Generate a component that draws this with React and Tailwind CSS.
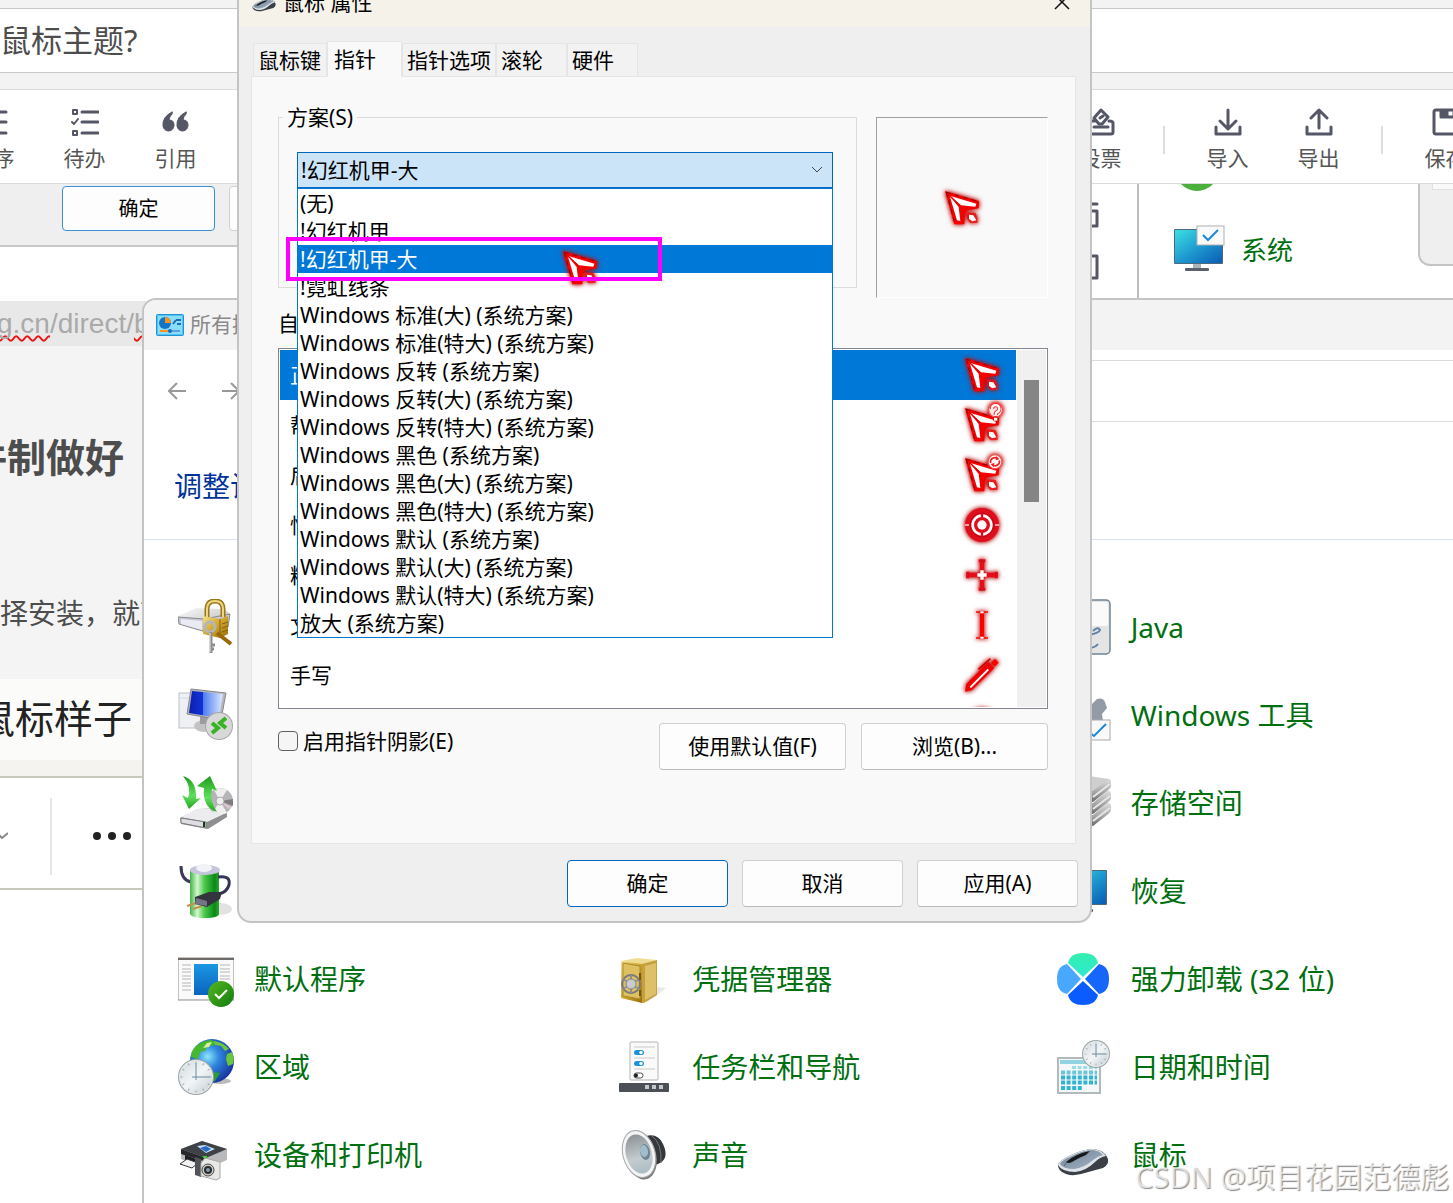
import React from "react";

const SCHEMES = [
  "(无)",
  "!幻红机甲",
  "!幻红机甲-大",
  "!霓虹线条",
  "Windows 标准(大) (系统方案)",
  "Windows 标准(特大) (系统方案)",
  "Windows 反转 (系统方案)",
  "Windows 反转(大) (系统方案)",
  "Windows 反转(特大) (系统方案)",
  "Windows 黑色 (系统方案)",
  "Windows 黑色(大) (系统方案)",
  "Windows 黑色(特大) (系统方案)",
  "Windows 默认 (系统方案)",
  "Windows 默认(大) (系统方案)",
  "Windows 默认(特大) (系统方案)",
  "放大 (系统方案)",
];
const CURRENT = "!幻红机甲-大";

/* ---------- pointer artwork ---------- */

function ArrowShape() {
  return (
    <>
      <path d="M0 0 102 30 101 52 66 58 60 68 58 100 28 100Z" fill="#f40000" />
      <path d="M4 4 98 31M4 4 30 98" stroke="#8a0000" strokeWidth="3" strokeDasharray="14 12" />
      <path d="M14 14 94 38 91 47 48 43Z" fill="#fff" />
      <path d="M14 14 41 48 46 90 36 88Z" fill="#fff" />
      <path d="M12 12 46 45" stroke="#e40000" strokeWidth="4" />
      <path d="M64 64 92 66Q100 82 98 96L76 96Q62 84 64 64Z" fill="#f01010" opacity="0.8" />
      <path d="M72 71 85 73 94 88 82 91 72 84Z" fill="#fff" />
    </>
  );
}

function Pointer({ kind = "arrow" }) {
  return (
    <svg
      viewBox="0 0 102 102"
      className="block size-[34px] shrink-0 overflow-visible [filter:drop-shadow(0_0_2px_#b00000)_drop-shadow(0_0_2px_#c8282880)]"
      fill="none"
      aria-hidden="true"
    >
      {(kind === "arrow" || kind === "help" || kind === "work") && <ArrowShape />}
      {kind === "help" && (
        <>
          <circle cx="92" cy="6" r="21" fill="#ffe4e4" stroke="#ff5050" strokeWidth="4" />
          <path d="M81 3A11 11 0 1 1 95 13Q92 15 92 21" stroke="#f03030" strokeWidth="13" />
          <path d="M81 3A11 11 0 1 1 95 13Q92 15 92 21" stroke="#fff" strokeWidth="7" />
          <circle cx="92" cy="33" r="8" fill="#e00000" />
          <rect x="87" y="29" width="10" height="9" fill="#fff" />
        </>
      )}
      {kind === "work" && (
        <>
          <circle cx="90" cy="11" r="21" fill="#fff" stroke="#ff5050" strokeWidth="4" />
          <path d="M77 15A13 13 0 0 1 98 2M103 7A13 13 0 0 1 82 20" stroke="#f02020" strokeWidth="5" />
          <path d="M94 -6 103 4 92 7ZM86 28 77 18 88 15Z" fill="#f02020" />
        </>
      )}
      {kind === "busy" && (
        <>
          <circle cx="51" cy="51" r="51" fill="#e00d1c" />
          <circle cx="51" cy="51" r="36" stroke="#b30a18" strokeWidth="3" />
          <circle cx="51" cy="51" r="28" stroke="#fff" strokeWidth="8" />
          <path d="M51 16V86" stroke="#e00d1c" strokeWidth="7" />
          <circle cx="51" cy="51" r="14" fill="#fff" />
          <path d="M0 51H12M90 51H102" stroke="#ffd0d0" strokeWidth="5" />
        </>
      )}
      {kind === "cross" && (
        <>
          <path d="M51 6V96M6 51H96" stroke="#e80c1a" strokeWidth="13" />
          <path d="M41 8H61M41 94H61M8 41V61M94 41V61" stroke="#d80c1a" strokeWidth="9" />
          <path d="M51 37V65M37 51H65" stroke="#fff" strokeWidth="10" />
        </>
      )}
      {kind === "text" && (
        <>
          <path d="M51 14V88" stroke="#f00" strokeWidth="12" />
          <path d="M33 12H47M55 12H69M33 90H47M55 90H69" stroke="#f00" strokeWidth="4" />
          <path d="M46 13H56M46 89H56" stroke="#fff" strokeWidth="5" />
        </>
      )}
      {kind === "pen" && (
        <>
          <path d="M0 101 4 78 70 12 88 30 20 97Z" fill="#f00000" />
          <path d="M40 34 76 2" stroke="#d00000" strokeWidth="5" />
          <path d="M16 88 70 34" stroke="#fff" strokeWidth="6" />
          <path d="M78 14 90 2 101 14 89 26Z" fill="#f00" />
        </>
      )}
      {kind === "deny" && <circle cx="51" cy="51" r="42" stroke="#e00d1c" strokeWidth="17" />}
    </svg>
  );
}

const ROLES = [
  ["正常选择", "arrow"],
  ["帮助选择", "help"],
  ["后台运行", "work"],
  ["忙", "busy"],
  ["精确选择", "cross"],
  ["文本选择", "text"],
  ["手写", "pen"],
  ["不可用", "deny"],
];

/* ---------- control panel artwork, each on a 56 unit grid ---------- */

function Defs() {
  return (
    <svg className="absolute size-0" aria-hidden="true">
      <defs>
        <linearGradient id="gold" x1="0" y1="0" x2="1" y2="1">
          <stop offset="0" stopColor="#f4e08e" />
          <stop offset="0.5" stopColor="#d0a52c" />
          <stop offset="1" stopColor="#96700c" />
        </linearGradient>
        <linearGradient id="steel" x1="0" y1="0" x2="1" y2="1">
          <stop offset="0" stopColor="#fdfdfd" />
          <stop offset="0.6" stopColor="#cfcfd2" />
          <stop offset="1" stopColor="#8b8b8f" />
        </linearGradient>
        <linearGradient id="slab" x1="0" y1="0" x2="0" y2="1">
          <stop offset="0" stopColor="#dedede" />
          <stop offset="0.6" stopColor="#a2a2a2" />
          <stop offset="1" stopColor="#6a6a6a" />
        </linearGradient>
        <linearGradient id="screen" x1="0" y1="0" x2="1" y2="1">
          <stop offset="0" stopColor="#3de0e2" />
          <stop offset="0.5" stopColor="#1f9bd0" />
          <stop offset="1" stopColor="#0a5cb4" />
        </linearGradient>
        <linearGradient id="blueScreen" x1="0" y1="0" x2="1" y2="0">
          <stop offset="0" stopColor="#0a1fb0" />
          <stop offset="0.4" stopColor="#1233d8" />
          <stop offset="0.42" stopColor="#4d7bf2" />
          <stop offset="1" stopColor="#dfeaff" />
        </linearGradient>
        <linearGradient id="leaf" x1="0" y1="0" x2="0" y2="1">
          <stop offset="0" stopColor="#1f9a1b" />
          <stop offset="0.6" stopColor="#5fe05a" />
          <stop offset="1" stopColor="#23a31e" />
        </linearGradient>
        <linearGradient id="cell" x1="0" y1="0" x2="1" y2="0">
          <stop offset="0" stopColor="#3fb544" />
          <stop offset="0.25" stopColor="#d4f7cf" />
          <stop offset="0.5" stopColor="#4cc84c" />
          <stop offset="0.85" stopColor="#088a14" />
          <stop offset="1" stopColor="#2fa637" />
        </linearGradient>
        <linearGradient id="appBlue" x1="0" y1="0" x2="0" y2="1">
          <stop offset="0" stopColor="#1c97e4" />
          <stop offset="1" stopColor="#0a63bd" />
        </linearGradient>
        <linearGradient id="okGreen" x1="0" y1="0" x2="1" y2="1">
          <stop offset="0" stopColor="#55b91c" />
          <stop offset="1" stopColor="#117a13" />
        </linearGradient>
        <radialGradient id="ocean" cx="0.4" cy="0.4" r="0.65">
          <stop offset="0" stopColor="#8ce6fa" />
          <stop offset="0.4" stopColor="#2f86dd" />
          <stop offset="1" stopColor="#182f9c" />
        </radialGradient>
        <linearGradient id="face" x1="0" y1="0" x2="1" y2="1">
          <stop offset="0" stopColor="#d3dade" />
          <stop offset="0.5" stopColor="#f2f5f6" />
          <stop offset="1" stopColor="#c4ced3" />
        </linearGradient>
        <linearGradient id="cone" x1="0" y1="0" x2="0" y2="1">
          <stop offset="0" stopColor="#8d9397" />
          <stop offset="0.6" stopColor="#c4ccd0" />
          <stop offset="1" stopColor="#a9bcc4" />
        </linearGradient>
        <linearGradient id="mouseTop" x1="0" y1="0" x2="1" y2="1">
          <stop offset="0" stopColor="#6f8195" />
          <stop offset="1" stopColor="#a5b5c7" />
        </linearGradient>
        <linearGradient id="petalTop" x1="0" y1="0" x2="0" y2="1">
          <stop offset="0" stopColor="#33efaf" />
          <stop offset="1" stopColor="#2ee9d0" />
        </linearGradient>
      </defs>
    </svg>
  );
}

function Clock({ cx, cy, r }) {
  return (
    <g>
      <circle cx={cx} cy={cy} r={r} fill="#9ba3a6" />
      <circle cx={cx} cy={cy} r={r - 1} fill="#e6eaeb" />
      <circle cx={cx} cy={cy} r={r - 2} fill="url(#face)" />
      <circle
        cx={cx}
        cy={cy}
        r={r - 3.5}
        fill="none"
        stroke="#7890a2"
        strokeWidth="2"
        pathLength="120"
        strokeDasharray="1 9"
        strokeDashoffset="0.5"
      />
      <path d={`M${cx} ${cy + 3}V${cy - r + 4}M${cx - 4} ${cy}H${cx + r - 4}`} stroke="#6b8aa0" strokeWidth="1" />
    </g>
  );
}

function MouseArt() {
  return (
    <>
      <path d="M3 38Q5 33 14 29 28 22 38 22 50 23 53 32 54 38 48 41L26 47Q14 50 7 45 3 42 3 38Z" fill="#3a4046" />
      <path d="M3 38Q5 33 14 29 28 22 38 22 47 23 51 29 45 30 40 35 31 44 20 45 7 45 3 38Z" fill="#dde3e8" />
      <path d="M5 37Q7 33 15 30 28 23 38 23 45 24 48 28 43 29 38 33 29 41 19 42 8 42 5 37Z" fill="url(#mouseTop)" />
      <path d="M11 35Q20 27 35 24L31 28Q23 31 17 35 13 37 11 35Z" fill="#16191c" />
      <path d="M12 35 9 39" stroke="#55616e" strokeWidth="1" />
    </>
  );
}

function MonitorArt() {
  return (
    <>
      <rect x="22" y="41" width="8" height="6" fill="#aab2ba" />
      <rect x="14" y="46" width="24" height="3" rx="1" fill="#59616a" />
      <rect x="3" y="7" width="49" height="35" rx="1" fill="#4c6a7c" />
      <rect x="4" y="8" width="47" height="33" fill="url(#screen)" />
    </>
  );
}

const ART = {
  lock: (
    <>
      <path d="M0 17 18 9 46 10 52 15 50 28 28 33 2 25Z" fill="url(#steel)" />
      <path d="M0 18 26 20 52 15 50 28 28 33 1 25Z" fill="#c9c9d3" stroke="#88888e" strokeWidth="1" />
      <path d="M3 20 24 22V31L3 25Z" fill="#ebebf6" />
      <path d="M29 18V10Q29 2 37 2T45 10V18" fill="none" stroke="#9a7818" strokeWidth="5" />
      <path d="M29 18V10Q29 2 37 2T45 10V18" fill="none" stroke="#f0d684" strokeWidth="2" />
      <path d="M25 17 42 20 50 17V35L42 39 25 35Z" fill="url(#gold)" />
      <path d="M42 20V39M44 25 50 23M44 29 50 27M44 33 50 31" stroke="#85600c" />
      <path d="M39 34 53 45" stroke="#9a6a08" strokeWidth="4" />
      <circle cx="32" cy="28" r="5" fill="none" stroke="#b5b5b5" strokeWidth="3" />
      <path d="M33 33V54M34 46H37M34 50H36" stroke="#8e8e8e" strokeWidth="3" />
      <path d="M32 34V53" stroke="#e8e8e8" strokeWidth="1" />
    </>
  ),
  remote: (
    <>
      <rect x="1" y="6" width="26" height="35" fill="#eef0f3" stroke="#bcc0c6" />
      <path d="M2 11H26" stroke="#d3d7dd" />
      <ellipse cx="26" cy="39" rx="10" ry="6" fill="#c3c3c6" />
      <path d="M22 30H32V37H22Z" fill="#9b9ba0" />
      <path d="M13 2 48 6 43 33 9 27Z" fill="#b7b7bb" stroke="#88888c" strokeWidth="1" />
      <path d="M14 4 45 7 41 31 11 26Z" fill="url(#blueScreen)" />
      <circle cx="41" cy="39" r="14" fill="#a6a6a6" />
      <circle cx="41" cy="39" r="13" fill="#d8d8d8" />
      <path d="M34 36 40 41 34 46M48 31 42 36 48 41" fill="none" stroke="#35b322" strokeWidth="4" />
    </>
  ),
  backup: (
    <>
      <path d="M2 43 20 34 44 33 49 38V42L30 54 3 49Z" fill="#8f8f92" />
      <path d="M2 42 20 34 44 33 48 38 29 47Z" fill="#ececee" />
      <path d="M3 43 28 47V53L3 48Z" fill="#dedee2" stroke="#7c7c80" />
      <rect x="25" y="47" width="2" height="5" fill="#103d12" />
      <circle cx="42" cy="26" r="13" fill="#b5b5b8" />
      <path d="M42 26 36 15Q42 11 49 15ZM42 26 49 38Q42 41 35 37Z" fill="#efeff0" />
      <path d="M42 26 55 24V31Z" fill="#7e7e82" />
      <path d="M42 26 53 32 51 34Z" fill="#e7c6cf" />
      <circle cx="42" cy="26" r="4" fill="#eee" stroke="#aaa" />
      <path d="M5 1Q19 5 18 24L23 23 11 34 4 20 10 23Q14 12 5 1Z" fill="url(#leaf)" />
      <path d="M32 1 39 16 34 14Q31 26 39 37 24 32 26 13L19 11Z" fill="url(#leaf)" />
    </>
  ),
  power: (
    <>
      <ellipse cx="42" cy="46" rx="12" ry="6" fill="#cfcfcf" opacity="0.6" />
      <path d="M3 3Q3 17 13 19" fill="none" stroke="#3a3a5c" strokeWidth="3" />
      <path d="M12 7V50Q12 55 27 55T41 50V7Z" fill="url(#cell)" />
      <ellipse cx="27" cy="7" rx="15" ry="5" fill="#c5c5dc" />
      <ellipse cx="26" cy="5" rx="8" ry="4" fill="#f2f2f8" />
      <path d="M40 14Q53 12 51 22 49 29 41 31" fill="none" stroke="#34345a" strokeWidth="3" />
      <path d="M18 40 9 43M24 43 15 46" stroke="#c58f52" strokeWidth="2" />
      <path d="M17 34 31 29 44 29 42 36 29 44 17 41Z" fill="#34343f" />
      <path d="M18 35 29 38V43L17 41Z" fill="#747485" />
    </>
  ),
  programs: (
    <>
      <rect x="0" y="7" width="56" height="42" fill="#fafafa" stroke="#8b8b8b" />
      <rect x="0" y="7" width="56" height="2" fill="#6d6a68" />
      <path
        d="M4 14H13M4 18H13M4 21H13M4 25H13M4 28H13M4 32H13M4 35H13M4 39H13M42 14H52M42 18H52M42 21H52M42 25H52M42 28H52"
        stroke="#b5b5b5"
      />
      <rect x="16" y="13" width="24" height="31" fill="url(#appBlue)" />
      <circle cx="43" cy="43" r="13" fill="url(#okGreen)" />
      <path d="M37 43 41 47 49 39" fill="none" stroke="#fff" strokeWidth="2" />
    </>
  ),
  region: (
    <>
      <ellipse cx="42" cy="42" rx="11" ry="3" fill="#bbb" />
      <circle cx="34" cy="22" r="22" fill="url(#ocean)" />
      <path d="M17 8Q25 1 33 1L38 3 35 7 30 6 27 12 22 13 20 20 13 18Q13 13 17 8Z" fill="#46b82e" />
      <path d="M36 2Q45 3 51 10L47 12 43 7 37 6ZM49 15 54 13Q57 20 55 25L50 27 48 20Z" fill="#69c63e" />
      <path d="M35 33 42 34 37 42 33 42Z" fill="#2f9b35" />
      <path d="M25 9 29 4 34 3 31 8Z" fill="#dcef9b" />
      <Clock cx={18} cy={38} r={18} />
    </>
  ),
  printer: (
    <>
      <path d="M3 22 24 14 49 22V33L28 42 3 32Z" fill="#b9b9bb" />
      <path d="M3 22 24 14 49 22 28 31Z" fill="#3e4247" />
      <path d="M3 22 28 31V35L3 27Z" fill="#26282c" />
      <path d="M19 19 27 18 37 22 28 26Z" fill="#bfe3fa" />
      <path d="M22 21 28 19 33 22 28 25Z" fill="#2c68c6" />
      <path d="M7 28 18 32V37L7 33Z" fill="#1c1d20" />
      <path d="M2 37 9 32 20 36 14 41Z" fill="#f2f2f2" stroke="#33363a" />
      <path d="M17 30 23 32V50L17 48Z" fill="#515357" />
      <path d="M23 36 27 31 42 35V51L38 53 23 49Z" fill="#e8e8e6" stroke="#a9a9a7" />
      <path d="M25 30H29" stroke="#39d02f" strokeWidth="2" />
      <circle cx="30" cy="43" r="6" fill="#c9c9c9" stroke="#4a4a4a" strokeWidth="1" />
      <circle cx="30" cy="43" r="4" fill="#2b2b2b" />
      <circle cx="30" cy="43" r="2" fill="#7f99aa" />
    </>
  ),
  safe: (
    <>
      <path d="M41 36 50 37 30 52Z" fill="#e8e8e8" />
      <path d="M5 10 21 7 41 9 26 14Z" fill="#efdc93" />
      <path d="M5 10 26 13V52L5 47Z" fill="url(#gold)" />
      <path d="M26 13 41 9V44L28 52 26 52Z" fill="#c5a03c" />
      <path d="M29 15 40 12V43L29 49Z" fill="#ddc067" />
      <path d="M7 12 24 15V48L7 45Z" fill="#dfc060" stroke="#a98726" strokeWidth="1" />
      <circle cx="15" cy="33" r="9" fill="none" stroke="#77797c" strokeWidth="2" />
      <path d="M15 24V42M7 28 23 38M7 38 23 28" stroke="#8d8f92" strokeWidth="2" />
      <circle cx="15" cy="33" r="5" fill="#c9cbcd" stroke="#85878a" />
      <path d="M24 22V29M24 39V45" stroke="#6f5a1a" strokeWidth="2" />
    </>
  ),
  taskbar: (
    <>
      <rect x="14" y="3" width="28" height="38" rx="1" fill="#fafafa" stroke="#b3b3b3" />
      <path d="M18 8H39M18 19H39M18 30H39" stroke="#c9c9c9" strokeWidth="1" />
      <rect x="18" y="11" width="10" height="5" rx="2.5" fill="#1b91dd" />
      <rect x="18" y="22" width="10" height="5" rx="2.5" fill="#1b91dd" />
      <circle cx="25" cy="13.5" r="1.7" fill="#fff" />
      <circle cx="25" cy="24.5" r="1.7" fill="#fff" />
      <rect x="18" y="34" width="9" height="5" rx="2.5" fill="#fff" stroke="#4a4a4a" />
      <circle cx="20" cy="36.5" r="2" fill="#222" />
      <rect x="3" y="44" width="50" height="9" rx="1" fill="#4b5056" />
      <path d="M29 46H33V50H29ZM36 46H40V50H36ZM43 46H47V50H43Z" fill="#c3c8cd" />
    </>
  ),
  sound: (
    <>
      <path d="M30 9Q42 6 47 17 54 32 42 37L34 40Z" fill="#35383b" />
      <path d="M36 9Q46 16 45 36" fill="none" stroke="#73777b" />
      <ellipse cx="24" cy="28" rx="16" ry="25" transform="rotate(-16 24 28)" fill="#77797b" />
      <ellipse cx="23" cy="27" rx="16" ry="24" transform="rotate(-16 23 27)" fill="#f4f4f4" stroke="#a5a7a9" />
      <ellipse cx="23" cy="27" rx="13" ry="20" transform="rotate(-16 23 27)" fill="url(#cone)" />
      <ellipse cx="29" cy="25" rx="5" ry="8" transform="rotate(-12 29 25)" fill="#6e8493" />
      <ellipse cx="28" cy="24" rx="4" ry="6" transform="rotate(-12 28 24)" fill="#a3bccb" />
    </>
  ),
  java: (
    <>
      <rect x="2" y="1" width="53" height="54" rx="4" fill="#e4e4e4" stroke="#6d8498" strokeWidth="1.5" />
      <rect x="4" y="3" width="49" height="24" rx="2" fill="#fafafa" />
      <path d="M34 36Q44 34 45 31 43 27 38 32M33 49Q40 49 43 45" fill="none" stroke="#5f84a6" strokeWidth="2" />
    </>
  ),
  tools: (
    <>
      <path d="M20 16Q24 10 30 14L36 18 42 12Q48 10 50 15L52 21 47 27 48 34H20Z" fill="#929ba6" />
      <rect x="26" y="33" width="29" height="20" fill="#f9f9f9" stroke="#a9a9a9" />
      <path d="M34 45 39 49 51 37" fill="none" stroke="#1c87dc" strokeWidth="2" />
    </>
  ),
  storage: (
    <>
      <path d="M6 38 38 40 52 28Q56 27 56 32V35Q56 37 52 40L38 51 6 46Z" fill="url(#slab)" />
      <path d="M6 26 38 28 52 16Q56 15 56 20V23Q56 25 52 28L38 39 6 34Z" fill="url(#slab)" />
      <path d="M6 10 38 15 52 4Q56 3 56 8V11Q56 13 52 16L38 27 6 22Z" fill="url(#slab)" />
      <path d="M6 8 34 1 54 4 38 16Z" fill="#cecece" />
      <path d="M38 22 55 9M38 34 55 21M38 46 55 33" stroke="#e6e6e6" strokeWidth="2" />
    </>
  ),
  recovery: <MonitorArt />,
  uninstall: (
    <>
      <path d="M28 26 13 12Q15 2 28 2T43 12Z" fill="url(#petalTop)" />
      <path d="M28 30 13 44Q15 54 28 54T43 44Z" fill="#0a5cff" />
      <path d="M26 28 12 13Q2 15 2 28T12 43Z" fill="#48a8ff" />
      <path d="M30 28 44 13Q54 15 54 28T44 43Z" fill="#1766fb" />
    </>
  ),
  calendar: (
    <>
      <rect x="3" y="19" width="42" height="35" fill="#f4f8f9" stroke="#b3babd" strokeWidth="2" />
      <rect x="5" y="21" width="38" height="4" fill="#92d3e2" />
      <path d="M17 28.5H42" stroke="#9fdbe8" strokeWidth="3" strokeDasharray="4 1.6" />
      <path d="M6 33.5H42" stroke="#6cc6dc" strokeWidth="4" strokeDasharray="4 1.6" />
      <path d="M6 38.5H42M6 43.5H42M6 49H27" stroke="#32b3d2" strokeWidth="4" strokeDasharray="4 1.6" />
      <Clock cx={41} cy={15} r={14} />
    </>
  ),
  mouse: <MouseArt />,
};

function Art({ name, className = "size-14" }) {
  return (
    <svg viewBox="0 0 56 56" className={`block shrink-0 ${className}`} aria-hidden="true">
      {ART[name]}
    </svg>
  );
}

const ITEMS = [
  ["lock", "", "BitLocker"], [null], ["java", "Java"],
  ["remote", "", "RemoteApp"], [null], ["tools", "Windows 工具"],
  ["backup", "", "备份和还原"], [null], ["storage", "存储空间"],
  ["power", "", "电源选项"], [null], ["recovery", "恢复"],
  ["programs", "默认程序"], ["safe", "凭据管理器"], ["uninstall", "强力卸载 (32 位)"],
  ["region", "区域"], ["taskbar", "任务栏和导航"], ["calendar", "日期和时间"],
  ["printer", "设备和打印机"], ["sound", "声音"], ["mouse", "鼠标"],
];

/* ---------- editor behind the windows ---------- */

const TOOL_ART = {
  sort: <path d="M4 4H26M4 14H26M4 25H26" />,
  todo: (
    <>
      <path d="M11 4H27M11 14H27M11 25H27" />
      <path d="M2 2H6V6H2ZM2 23H6V27H2ZM1 14 3 16 7 11" strokeWidth="2" />
    </>
  ),
  quote: (
    <path
      d="M10 4Q0 9 1 18 2 23 7 23 12 22 12 17 12 12 7 12 7 9 10 6ZM24 4Q14 9 15 18 16 23 21 23 26 22 26 17 26 12 21 12 21 9 24 6Z"
      fill="currentColor"
      strokeWidth="1"
    />
  ),
  vote: (
    <>
      <path d="M8 13H4Q2 13 2 15V24Q2 26 4 26H24Q26 26 26 24V15Q26 13 22 13M7 19H21" />
      <path d="M14 2 21 9 15 16H12L7 10Z" />
      <path d="M13 10 16 8" />
    </>
  ),
  import: <path d="M14 2V20M6 13 14 21 22 13M2 19V26H26V19" />,
  export: <path d="M14 20V3M6 10 14 2 22 10M2 19V26H26V19" />,
  save: (
    <>
      <path d="M4 2H26V26H4Q2 26 2 24V4Q2 2 4 2ZM9 2V9H22V2" />
      <path d="M10 3H15V8H10Z" fill="currentColor" />
    </>
  ),
};

function Tool({ art, label }) {
  return (
    <button type="button" className="flex w-[91px] shrink-0 flex-col items-center gap-2 text-[21px] leading-7 text-[#555]">
      <svg
        viewBox="0 0 28 28"
        className="size-7 text-[#555666]"
        fill="none"
        stroke="currentColor"
        strokeWidth="3"
        strokeLinecap="round"
        strokeLinejoin="round"
        aria-hidden="true"
      >
        {TOOL_ART[art]}
      </svg>
      {label}
    </button>
  );
}

function ToolGap() {
  return (
    <div className="flex w-9 shrink-0 justify-center">
      <span className="h-7 w-0.5 bg-[#ddd]" />
    </div>
  );
}

function Editor() {
  return (
    <div className="whitespace-nowrap bg-white">
      <div className="h-2 bg-[#f3f3f3]" />
      <div className="flex h-[65px] items-center border-y border-[#c8c8c8] text-[31px] text-[#4d4d4d]">
        <h1>鼠标主题?</h1>
      </div>
      <div className="h-4 bg-[#f3f3f3]" />
      <div className="flex h-[95px] items-center overflow-hidden border-y border-[#dcdcdc] pt-1.5">
        <div className="-ml-[52px] flex">
          <Tool art="sort" label="有序" />
          <Tool art="todo" label="待办" />
          <Tool art="quote" label="引用" />
        </div>
        <div className="-mr-[38px] ml-auto flex items-center">
          <Tool art="vote" label="投票" />
          <ToolGap />
          <Tool art="import" label="导入" />
          <Tool art="export" label="导出" />
          <ToolGap />
          <Tool art="save" label="保存" />
        </div>
      </div>

      <div className="flex h-[117px] justify-between">
        <div className="flex h-[63px] w-60 shrink-0 items-start gap-3.5 overflow-hidden border-b-2 border-[#c8c8c8] bg-[#efefef] pl-[62px] pt-0.5">
          <button type="button" className="h-[45px] w-[153px] shrink-0 rounded border border-[#3c8fd6] bg-[#fdfdfd] text-xl text-black">
            确定
          </button>
          <span className="h-[45px] w-20 shrink-0 rounded border border-[#d0d0d0] bg-[#fdfdfd]" />
        </div>
        <div className="flex w-[373px] shrink-0">
          <div className="flex w-[59px] flex-col items-end gap-[26px] border-r-2 border-[#bdbdbd] pr-[38px] pt-[18px] text-[#555666]">
            <svg viewBox="0 0 26 26" className="size-[26px]" fill="none" stroke="currentColor" strokeWidth="3" aria-hidden="true">
              <path d="M2 2H24M4 9H24V24H4Z" strokeLinejoin="round" strokeLinecap="round" />
            </svg>
            <svg viewBox="0 0 26 26" className="size-[26px]" fill="none" stroke="currentColor" strokeWidth="3" aria-hidden="true">
              <path d="M2 2H24V24H2Z" strokeLinejoin="round" />
            </svg>
          </div>
          <div className="flex flex-1 flex-col pl-8">
            <svg viewBox="0 0 56 7" className="h-[7px] w-14" aria-hidden="true">
              <circle cx="26" cy="-15" r="22" fill="#4bb13c" />
            </svg>
            <a href="#system" className="mt-[31px] flex items-center gap-3.5 text-[26px] leading-[56px] text-[#006f0f]">
              <svg viewBox="0 0 56 56" className="size-14" aria-hidden="true">
                <MonitorArt />
                <rect x="26" y="4" width="27" height="19" fill="#fafafa" stroke="#b0b0b0" />
                <path d="M32 13 37 18 47 8" fill="none" stroke="#1c87dc" strokeWidth="2" />
              </svg>
              系统
            </a>
          </div>
          <div className="h-[82px] w-[35px] rounded-bl-xl border-b-2 border-l-2 border-[#c4c4c4] bg-[#efefef] pl-3">
            <div className="h-1.5 border-b border-l border-[#e0e0e0] bg-[#f9f9f9]" />
          </div>
        </div>
      </div>

      <div className="h-[45px] overflow-hidden bg-[#e8e8e8] font-['Liberation_Sans',sans-serif] text-[28px] leading-[45px] text-[#aaa]">
        <span className="-ml-[3px] underline decoration-[#f01010] decoration-wavy decoration-2 underline-offset-2 [text-decoration-skip-ink:none]">
          g.cn
        </span>
        /direct/
        <span className="underline decoration-[#f01010] decoration-wavy decoration-2 underline-offset-2">b</span>
      </div>
      <div className="h-[333px] bg-[#f4f4f4] pt-[83px] text-[#4d4d4d]">
        <h2 className="-ml-8 text-[39px] font-bold leading-[56px]">件制做好</h2>
        <p className="-ml-7 mt-[108px] text-[28px] leading-10">选择安装，就可以</p>
      </div>
      <div className="h-[99px] border-b-2 border-[#c9c8bd] bg-[#f4f3f0]">
        <p className="-ml-6 bg-[#fbfbfa] pb-1 pr-6 text-[39px] leading-[77px] text-[#222]">鼠标样子</p>
      </div>
      <div className="flex h-[112px] items-center border-b-2 border-[#c9c8bd] pt-1.5">
        <svg viewBox="0 0 12 8" className="-ml-1 h-2 w-3" fill="none" stroke="#888" strokeWidth="2" aria-hidden="true">
          <path d="M1 1 6 6 12 1" />
        </svg>
        <span className="ml-[42px] h-[77px] w-0.5 bg-[#e6e6e6]" />
        <svg viewBox="0 0 40 8" className="ml-10 h-2 w-10" fill="#222" aria-hidden="true">
          <circle cx="5" cy="4" r="4" />
          <circle cx="20" cy="4" r="4" />
          <circle cx="35" cy="4" r="4" />
        </svg>
      </div>
    </div>
  );
}

/* ---------- control panel window ---------- */

function ControlPanel() {
  return (
    <section className="absolute -bottom-4 -right-[42px] left-[142px] top-[298px] overflow-hidden whitespace-nowrap rounded-tl-[14px] border-2 border-[#c4c4c4] bg-white">
      <div className="flex h-[50px] items-center gap-1.5 bg-[#f3f3f3] pl-3 text-[21px] text-[#8a8a8a]">
        <svg viewBox="0 0 28 22" className="h-[22px] w-7" aria-hidden="true">
          <rect x="0.5" y="0.5" width="27" height="21" rx="1" fill="#4cc4f4" stroke="#2492d2" />
          <rect x="2" y="2" width="24" height="18" fill="#8adcfb" />
          <circle cx="9" cy="9" r="6" fill="#1674c6" />
          <path d="M9 9V3A6 6 0 0 1 15 9Z" fill="#f7931e" />
          <path d="M17 10 20 6M20 6H25M21 10H25" stroke="#1a6ec0" strokeWidth="2" />
          <path d="M4 17H24" stroke="#1a6ec0" strokeWidth="1" />
          <path d="M4 17H13" stroke="#f7931e" strokeWidth="2" />
          <circle cx="14" cy="17" r="2" fill="#1a6ec0" />
        </svg>
        <span>所有控制面板项</span>
      </div>
      <nav className="flex items-center gap-9 pl-6 pt-2.5">
        <button type="button" aria-label="后退">
          <svg viewBox="0 0 18 18" className="size-[18px]" fill="none" stroke="#999" strokeWidth="2" aria-hidden="true">
            <path d="M18 9H1M9 1 1 9 9 17" />
          </svg>
        </button>
        <button type="button" aria-label="前进">
          <svg viewBox="0 0 18 18" className="size-[18px]" fill="none" stroke="#999" strokeWidth="2" aria-hidden="true">
            <path d="M0 9H17M9 1 17 9 9 17" />
          </svg>
        </button>
        <div className="ml-10 h-[62px] flex-1 border border-[#dcdcdc]" />
      </nav>
      <h2 className="h-[118px] border-b border-[#d9e2ee] pl-[30px] pt-11 text-[28px] leading-10 text-[#003399]">调整计算机的设置</h2>
      <div className="grid auto-rows-[88px] grid-cols-3 items-center pl-[34px] pt-[43px]">
        {ITEMS.map(([art, label, hint], i) =>
          art ? (
            <a
              key={i}
              href={`#${art}`}
              aria-label={hint}
              className="flex items-center gap-5 text-[28px] leading-10 text-[#006f0f]"
            >
              <Art name={art} />
              {label}
            </a>
          ) : (
            <span key={i} />
          )
        )}
      </div>
    </section>
  );
}

/* ---------- mouse properties dialog ---------- */

const TABS = [
  ["鼠标键", "w-[74px]"],
  ["指针", "w-[75px]"],
  ["指针选项", "w-[94px]"],
  ["滚轮", "w-[71px]"],
  ["硬件", "w-[71px]"],
];

function PushButton({ children, primary, wide }) {
  return (
    <button
      type="button"
      className={`h-[47px] rounded border bg-[#fdfdfd] pb-0.5 ${wide ? "w-[187px]" : "w-[161px]"} ${
        primary ? "border-[#0067c0]" : "border-[#d0d0d0] border-b-[#bababa]"
      }`}
    >
      {children}
    </button>
  );
}

function SchemePicker() {
  return (
    <div className="relative">
      <div className="relative">
        <select
          aria-label="方案"
          defaultValue={CURRENT}
          className="block h-9 w-full appearance-none border border-[#0067c0] bg-[#cce4f7] pl-[3px] pr-8 text-[21px] outline-none"
        >
          {SCHEMES.map((s) => (
            <option key={s}>{s}</option>
          ))}
        </select>
        <svg
          viewBox="0 0 12 8"
          className="pointer-events-none absolute right-2.5 top-3.5 h-2 w-3"
          fill="none"
          stroke="#444"
          strokeWidth="1"
          aria-hidden="true"
        >
          <path d="M1 1 6 6 11 1" />
        </svg>
      </div>
      <ul role="listbox" aria-label="方案列表" className="absolute inset-x-0 top-9 z-10 border border-[#0078d7] bg-white">
        {SCHEMES.map((s) => (
          <li
            key={s}
            role="option"
            aria-selected={s === CURRENT}
            className={`h-7 pl-0.5 leading-7 ${s === CURRENT ? "bg-[#0078d7] text-white" : ""}`}
          >
            {s}
          </li>
        ))}
      </ul>
      <div className="absolute left-[266px] top-[99px] z-10">
        <Pointer />
      </div>
      <div className="absolute -left-[11px] right-[171px] top-[85px] z-10 h-11 border-4 border-[#ff00ff]" />
    </div>
  );
}

function MouseProperties() {
  return (
    <section
      role="dialog"
      aria-label="鼠标 属性"
      className="absolute -top-[22px] left-[237px] right-[361px] whitespace-nowrap rounded-[14px] border-2 border-[#c4c4c4] bg-[#efefef] text-[21px] leading-7 text-black"
    >
      <header className="flex h-[47px] items-center gap-1.5 rounded-t-xl bg-[#f5f2ea] pb-1 pl-3 pr-5">
        <Art name="mouse" className="size-[26px]" />
        <span className="flex-1">鼠标 属性</span>
        <button type="button" aria-label="关闭">
          <svg viewBox="0 0 16 16" className="size-4" fill="none" stroke="#111" strokeWidth="1.5" aria-hidden="true">
            <path d="M1 1 15 15M15 1 1 15" />
          </svg>
        </button>
      </header>
      <div className="px-3 pb-3.5 pt-3.5">
        <div role="tablist" className="-mb-px flex items-end pl-0.5">
          {TABS.map(([name, width], i) => (
            <button
              key={name}
              type="button"
              role="tab"
              aria-selected={i === 1}
              className={`border border-[#e5e5e5] text-left ${width} ${
                i === 1 ? "relative h-9 border-b-[#f9f9f9] bg-[#f9f9f9] pl-1.5" : "h-[34px] bg-[#f2f2f2] pl-1"
              }`}
            >
              {name}
            </button>
          ))}
        </div>
        <div role="tabpanel" className="mr-0.5 border border-[#e5e5e5] bg-[#f9f9f9] pb-[73px] pl-[26px] pr-[27px] pt-10">
          <div className="flex items-start gap-[19px]">
            <fieldset className="-mt-3.5 h-[185px] flex-1 border border-[#dcdcdc] pl-[18px] pr-[23px]">
              <legend className="-ml-3.5 px-1">方案(S)</legend>
              <div className="pt-[21px]">
                <SchemePicker />
              </div>
            </fieldset>
            <div className="flex h-[181px] w-[172px] items-center justify-center border border-b-white border-l-[#a0a0a0] border-r-white border-t-[#a0a0a0]">
              <Pointer />
            </div>
          </div>
          <h3 className="mt-[11px]">自定义(C):</h3>
          <div className="mt-[11px] flex h-[361px] gap-px border border-[#828790] bg-white p-px">
            <ul className="flex-1 overflow-hidden">
              {ROLES.map(([name, kind], i) => (
                <li
                  key={name}
                  className={`flex h-[50px] items-center justify-between pl-2.5 pr-[17px] ${
                    i === 0 ? "bg-[#0078d7] text-white" : ""
                  }`}
                >
                  {name}
                  <Pointer kind={kind} />
                </li>
              ))}
            </ul>
            <div className="w-[29px] bg-[#f0f0f0] pl-[7px] pt-[30px]">
              <div className="h-[122px] w-[15px] bg-[#858585]" />
            </div>
          </div>
          <div className="mt-3.5 flex items-start gap-[15px]">
            <label className="flex h-9 flex-1 items-center gap-[5px]">
              <input type="checkbox" className="size-5 appearance-none rounded border border-[#5f5f5f] bg-[#f5f5f5]" />
              启用指针阴影(E)
            </label>
            <PushButton wide>使用默认值(F)</PushButton>
            <PushButton wide>浏览(B)...</PushButton>
          </div>
        </div>
        <div className="mt-4 flex justify-end gap-3.5">
          <PushButton primary>确定</PushButton>
          <PushButton>取消</PushButton>
          <PushButton>应用(A)</PushButton>
        </div>
      </div>
    </section>
  );
}

export default function App() {
  return (
    <main className="relative h-screen overflow-hidden bg-white font-['Noto_Sans','Noto_Sans_CJK_SC',sans-serif]">
      <Defs />
      <Editor />
      <ControlPanel />
      <MouseProperties />
      <p className="absolute bottom-1.5 right-1 whitespace-nowrap text-[29px] leading-10 text-white/70 [text-shadow:1px_1px_1px_#8a8a8a]">
        CSDN @项目花园范德彪
      </p>
    </main>
  );
}
